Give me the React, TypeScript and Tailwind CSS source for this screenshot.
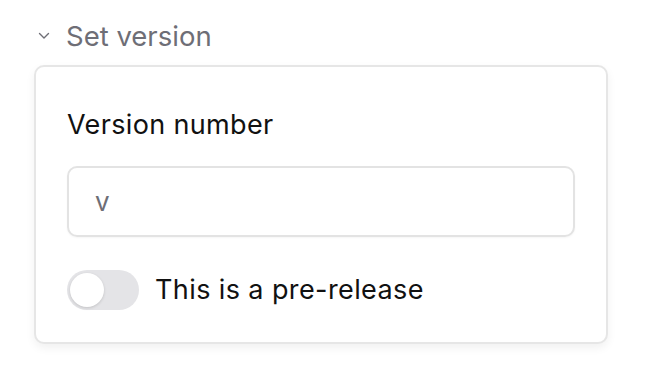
import { useState } from 'react';

export default function App() {
  const [isPreRelease, setIsPreRelease] = useState(false);

  return (
    <main
      className="min-h-screen bg-white px-[34px] pt-[19px]"
      style={{ fontFamily: 'Inter, "Noto Sans", sans-serif' }}
    >
      <div className="flex items-center gap-[16px] pl-[4px]">
        <svg width="12" height="8" viewBox="0 0 12 8" className="text-[#6e6e76]" aria-hidden="true">
          <path d="M1.5 1.5 L6 6 L10.5 1.5" fill="none" stroke="currentColor" strokeWidth="1.4" strokeLinecap="round" strokeLinejoin="round" />
        </svg>
        <h2 className="text-[27.5px] leading-[34px] text-[#6e6e76]">Set version</h2>
      </div>

      <section className="mt-[12px] w-[574px] rounded-[10px] border-2 border-[#e6e6e6] bg-white px-[31px] pt-[43px] pb-[32px] shadow-[0_4px_10px_rgba(0,0,0,0.06)]">
        <label className="block text-[27px] leading-[30px] tracking-[0.35px] text-[#111111]">Version number</label>

        <input
          type="text"
          placeholder="v"
          className="mt-[26px] h-[71px] w-[508px] rounded-[10px] border-2 border-[#e3e3e3] px-[26px] text-[26px] text-[#111] shadow-[0_1px_2px_rgba(0,0,0,0.04)] outline-none placeholder:text-[#6e6e76]"
        />

        <div className="mt-[33px] flex items-center gap-[16px]">
          <button
            type="button"
            onClick={() => setIsPreRelease(!isPreRelease)}
            className={`flex h-[40px] w-[72px] items-center rounded-full p-[3px] ${isPreRelease ? 'bg-[#111111]' : 'bg-[#e4e4e7]'}`}
          >
            <span
              className={`h-[34px] w-[34px] rounded-full bg-white shadow-[0_1px_3px_rgba(0,0,0,0.15)] ${isPreRelease ? 'translate-x-[32px]' : ''}`}
            />
          </button>
          <span className="text-[27px] leading-[30px] tracking-[0.4px] text-[#111111]">This is a pre-release</span>
        </div>
      </section>
    </main>
  );
}
